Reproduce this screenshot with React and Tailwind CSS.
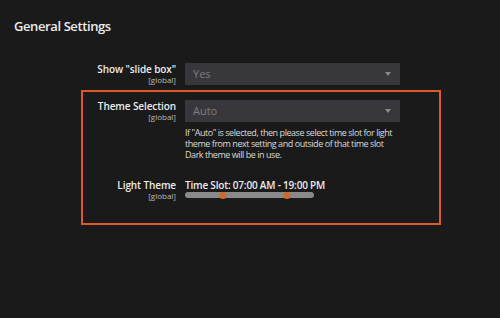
import React from 'react';

const font = { fontFamily: '"Open Sans", "Noto Sans", sans-serif' };

const Label = ({ title }) => (
  <div className="flex w-[93px] shrink-0 flex-col items-end">
    <span className="text-[10px] font-semibold leading-[12px] tracking-[-0.1px] text-[#ececec]">{title}</span>
    <span className="text-[8px] leading-[9px] text-[#bdbdbd]">[global]</span>
  </div>
);

const Select = ({ value }) => (
  <div className="flex h-[22px] w-[215px] items-center justify-between bg-[#38373c] pl-[8px] pr-[9px]">
    <span className="text-[11px] text-[#7d7d80]">{value}</span>
    <span className="h-0 w-0 border-x-[3px] border-t-[4px] border-x-transparent border-t-[#8a8a8d]" />
  </div>
);

const TimeSlot = ({ from, to }) => {
  const pct = (h) => `${(h / 24) * 100}%`;
  return (
    <div className="flex flex-col">
      <span className="text-[10px] font-semibold leading-[12px] tracking-[-0.2px] text-[#ececec]">
        Time Slot: 07:00 AM - 19:00 PM
      </span>
      <div className="relative mt-[1px] h-[6px] w-[129px] rounded-full bg-[#8a8a8a]">
        <span className="absolute top-[-0.5px] h-[7px] w-[7px] -translate-x-1/2 rounded-full bg-[#d2692a]" style={{ left: pct(from) }} />
        <span className="absolute top-[-0.5px] h-[7px] w-[7px] -translate-x-1/2 rounded-full bg-[#d2692a]" style={{ left: pct(to) }} />
      </div>
    </div>
  );
};

export default function App() {
  return (
    <div className="h-[318px] w-[500px] bg-[#1a1a1a]" style={font}>
      <div className="px-[14px] pt-[16px] text-[13px] font-semibold leading-[20px] tracking-[-0.4px] text-[#ececec]">
        General Settings
      </div>

      <div className="ml-[81px] mt-[27px] w-[360px]">
        <div className="flex pl-[2px]">
          <Label title={'Show "slide box"'} />
          <div className="ml-[9px]">
            <Select value="Yes" />
          </div>
        </div>

        <div className="mt-[5px] border-2 border-[#dc5a2a] pb-[23px] pt-[8px]">
          <div className="flex">
            <Label title="Theme Selection" />
            <div className="ml-[9px] flex flex-col">
              <Select value="Auto" />
              <p className="mt-[5px] w-[218px] text-[9px] leading-[11px] tracking-[-0.45px] text-[#dadada]">
                If "Auto" is selected, then please select time slot for light theme from next setting and outside of that time slot Dark theme will be in use.
              </p>
            </div>
          </div>

          <div className="mt-[19px] flex">
            <Label title="Light Theme" />
            <div className="ml-[9px]">
              <TimeSlot from={7} to={19} />
            </div>
          </div>
        </div>
      </div>
    </div>
  );
}
